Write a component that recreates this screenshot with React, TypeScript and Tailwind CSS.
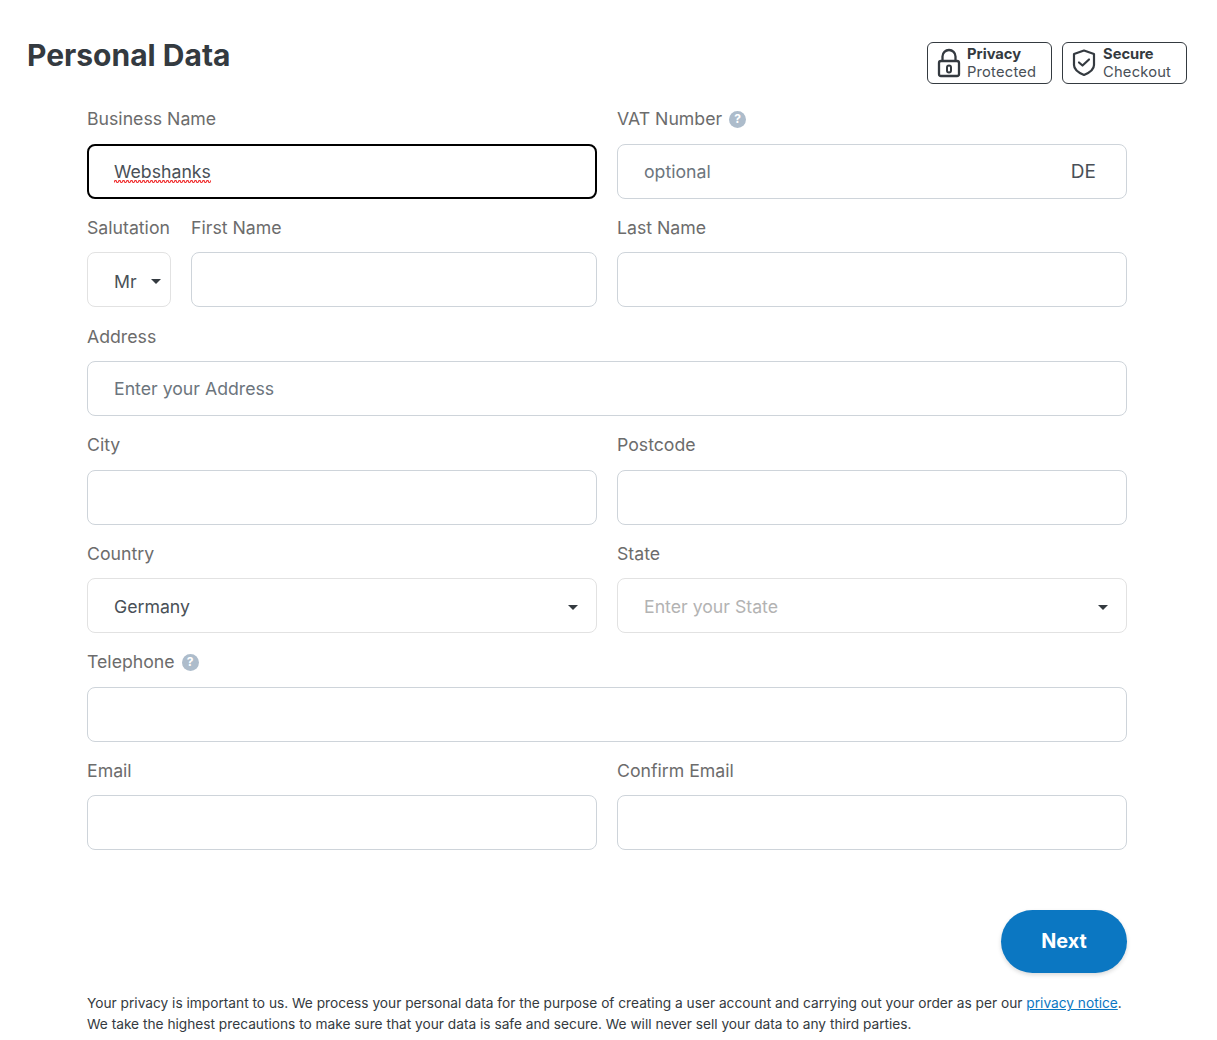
const inputCls =
  "block w-full h-[55px] px-[26px] bg-white border border-[#ced4da] rounded-[8px] text-[17.7px] text-[#495057] placeholder:text-[#6c757d] outline-none";

function Caret() {
  return <span className="w-0 h-0 border-x-[5px] border-x-transparent border-t-[5px] border-t-[#343a40]" />;
}

function HelpIcon() {
  return (
    <span className="inline-flex items-center justify-center w-[17px] h-[17px] rounded-full bg-[#adbccb] text-white text-[12px] font-bold leading-none">
      ?
    </span>
  );
}

function Label({ children, help }: { children: string; help?: boolean }) {
  return (
    <div className="flex items-center gap-[7px] h-[25.4px] mb-[11.6px] text-[17.7px] leading-[24px] text-[#6c6c6c] whitespace-nowrap">
      {children}
      {help && <HelpIcon />}
    </div>
  );
}

function Field({ label, help, placeholder }: { label: string; help?: boolean; placeholder?: string }) {
  return (
    <div className="min-w-0">
      <Label help={help}>{label}</Label>
      <input className={inputCls} placeholder={placeholder} />
    </div>
  );
}

function Select({ value, muted, className }: { value: string; muted?: boolean; className?: string }) {
  return (
    <div className={`flex items-center justify-between h-[55px] bg-white border border-[#e2e2e2] rounded-[8px] text-[17.7px] ${muted ? "text-[#b3b3b3]" : "text-[#495057]"} ${className}`}>
      <span>{value}</span>
      <Caret />
    </div>
  );
}

function Badge({ icon, title, sub, gap }: { icon: React.ReactNode; title: string; sub: string; gap: string }) {
  return (
    <div className={`flex items-center w-[125px] h-[42px] border border-[#343a40] rounded-[6px] pl-[9px] ${gap} text-[#343a40]`}>
      {icon}
      <div className="text-[14.72px] leading-[18px]">
        <div className="font-bold">{title}</div>
        <div className="text-[#495057] tracking-[0.2px]">{sub}</div>
      </div>
    </div>
  );
}

export default function App() {
  return (
    <div className="w-[1217px] h-[1040px] bg-white font-['Inter',sans-serif] overflow-hidden pt-[42px] pl-[27px] pr-[30px]">
      {/* Header */}
      <div className="flex items-start justify-between h-[64.8px]">
        <h1 className="text-[30px] leading-[26px] font-bold text-[#343a40]">Personal Data</h1>
        <div className="flex gap-[10px]">
          <Badge
            title="Privacy"
            sub="Protected"
            gap="gap-[6px]"
            icon={
              <svg width="24" height="30" viewBox="0 0 24 30" fill="none" stroke="#343a40" strokeWidth="2.3">
                <path d="M5.500 13V8.500a6.500 6.500 0 0 1 13 0V13" />
                <rect x="2" y="13" width="20" height="15" rx="2" />
                <rect x="10" y="17.500" width="4" height="7" rx="2" strokeWidth="2" />
              </svg>
            }
          />
          <Badge
            title="Secure"
            sub="Checkout"
            gap="gap-[7px]"
            icon={
              <svg width="24" height="30" viewBox="0 0 24 30" fill="none" stroke="#343a40" strokeWidth="2.2" strokeLinejoin="round">
                <path d="M12 2.500l10 3.500V17c0 4-4 7.500-10 10C6 24.500 2 21 2 17V6z" />
                <path d="M7 14.500l3.500 3 6.500-6" strokeLinecap="round" />
              </svg>
            }
          />
        </div>
      </div>

      {/* Form */}
      <div className="ml-[60px] w-[1040px] grid grid-cols-2 gap-x-[20px] gap-y-[16.6px]">
        <div>
          <Label>Business Name</Label>
          <div className="flex items-center h-[55px] pt-[2px] px-[25px] border-2 border-black rounded-[8px] text-[17.7px] leading-[24px] text-[#495057]">
            <span className="relative">
              Webshanks
              {/* spellcheck squiggle */}
              <svg className="absolute left-0 bottom-[1.5px] w-full h-[3px]" preserveAspectRatio="none">
                <pattern id="squiggle" width="4" height="3" patternUnits="userSpaceOnUse">
                  <path d="M0 2.500L1 .5h1l1 2h1" fill="none" stroke="#f03030" strokeWidth="1.2" />
                </pattern>
                <rect width="100%" height="3" fill="url(#squiggle)" />
              </svg>
            </span>
          </div>
        </div>
        <div>
          <Label help>VAT Number</Label>
          <div className="relative">
            <input className={inputCls} placeholder="optional" />
            <span className="absolute right-[31px] top-[16px] text-[19px] leading-[24px] text-[#495057]">DE</span>
          </div>
        </div>

        <div className="flex gap-[20px] min-w-0">
          <div className="w-[84px] shrink-0">
            <Label>Salutation</Label>
            <Select value="Mr" className="pt-[4px] pl-[26px] pr-[9px] mt-[1px]" />
          </div>
          <div className="flex-1">
            <Field label="First Name" />
          </div>
        </div>
        <Field label="Last Name" />

        <div className="col-span-2">
          <Field label="Address" placeholder="Enter your Address" />
        </div>

        <Field label="City" />
        <Field label="Postcode" />

        <div>
          <Label>Country</Label>
          <Select value="Germany" className="pt-[3px] pl-[26px] pr-[18px]" />
        </div>
        <div>
          <Label>State</Label>
          <Select value="Enter your State" muted className="pt-[3px] pl-[26px] pr-[18px]" />
        </div>

        <div className="col-span-2">
          <Field label="Telephone" help />
        </div>

        <Field label="Email" />
        <Field label="Confirm Email" />
      </div>

      {/* Footer */}
      <div className="ml-[60px] w-[1040px] mt-[60px]">
        <div className="flex justify-end">
          <button className="w-[126px] h-[63px] rounded-full bg-[#0b77c2] text-white text-[19.8px] font-bold shadow-[0_2px_4px_rgba(0,0,0,0.15)]">
            Next
          </button>
        </div>
        <p className="mt-[20px] text-[13.71px] leading-[21px] text-[#343a40] whitespace-nowrap">
          Your privacy is important to us. We process your personal data for the purpose of creating a user account and carrying out your order as per our{" "}
          <a className="text-[#0b77c2] underline">privacy notice</a>.
          <br />
          We take the highest precautions to make sure that your data is safe and secure. We will never sell your data to any third parties.
        </p>
      </div>
    </div>
  );
}
